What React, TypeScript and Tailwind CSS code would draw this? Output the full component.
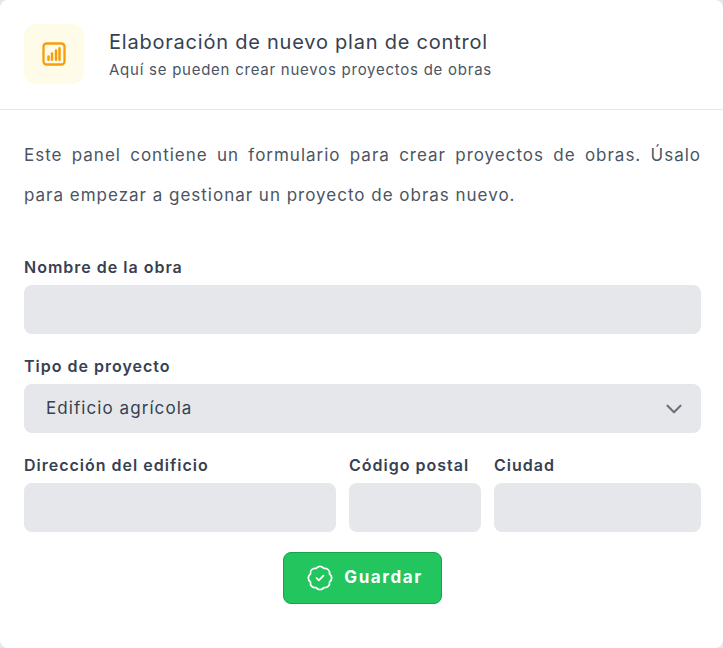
import { BadgeCheck, ChevronDown } from 'lucide-react';

function Label({ children }: { children: string }) {
  return <label className="block text-[16px] leading-[22px] font-semibold tracking-[1px] text-[#374151]">{children}</label>;
}

function Field({ label, className }: { label: string; className?: string }) {
  return (
    <div className={className}>
      <Label>{label}</Label>
      <div className="mt-[7px] h-[49px] rounded-lg bg-[#e5e7eb]" />
    </div>
  );
}

export default function App() {
  return (
    <div className="h-[648px] w-[723px] bg-[#e5e7eb] font-['Inter',sans-serif]">
      <div className="h-full overflow-hidden rounded-lg bg-white">
        <div className="flex h-[110px] items-center gap-[25px] border-b border-[#e5e7eb] px-6 pb-[2px]">
          <div className="flex h-[60px] w-[60px] items-center justify-center rounded-xl bg-[#fefce8]">
            <svg width="24" height="24" viewBox="0 0 24 24" fill="none" stroke="#f59e0b" strokeWidth="2.3" strokeLinecap="round">
              <rect x="1.5" y="1.5" width="21" height="21" rx="3" />
              <path strokeWidth="2.5" d="M6.5 14.5v3.2M10 11.5v6.2M14 8.5v9.2M17.5 6.2v11.5" />
            </svg>
          </div>
          <div>
            <h1 className="text-[20px] leading-7 font-normal tracking-[0.78px] text-[#374151]">Elaboración de nuevo plan de control</h1>
            <p className="mt-1 text-[15px] leading-5 tracking-[0.75px] text-[#4b5563]">Aquí se pueden crear nuevos proyectos de obras</p>
          </div>
        </div>
        <div className="pt-[25px] pr-[22px] pl-6">
          <p className="text-justify text-[17px] leading-10 tracking-[0.99px] text-[#4b5563]">
            Este panel contiene un formulario para crear proyectos de obras. Úsalo para empezar a gestionar un proyecto de obras nuevo.
          </p>
          <div className="mt-[41px] flex flex-col gap-[21px]">
            <Field label="Nombre de la obra" />
            <div>
              <Label>Tipo de proyecto</Label>
              <div className="mt-[7px] flex h-[49px] items-center justify-between rounded-lg bg-[#e5e7eb] pr-[14px] pl-[22px]">
                <span className="text-[17px] tracking-[1.07px] text-[#374151]">Edificio agrícola</span>
                <ChevronDown size={26} strokeWidth={2} className="text-[#6b7280]" />
              </div>
            </div>
            <div className="flex gap-[13px]">
              <Field label="Dirección del edificio" className="w-[312px]" />
              <Field label="Código postal" className="w-[132px]" />
              <Field label="Ciudad" className="flex-1" />
            </div>
          </div>
          <div className="mt-5 flex justify-center">
            <button className="flex h-[52px] w-[159px] items-center justify-center gap-[10px] rounded-lg border border-[#16a34a] bg-[#22c55e] pl-1 text-[17px] font-bold tracking-[1.6px] text-white">
              <BadgeCheck size={28} strokeWidth={1.5} />
              Guardar
            </button>
          </div>
        </div>
      </div>
    </div>
  );
}
